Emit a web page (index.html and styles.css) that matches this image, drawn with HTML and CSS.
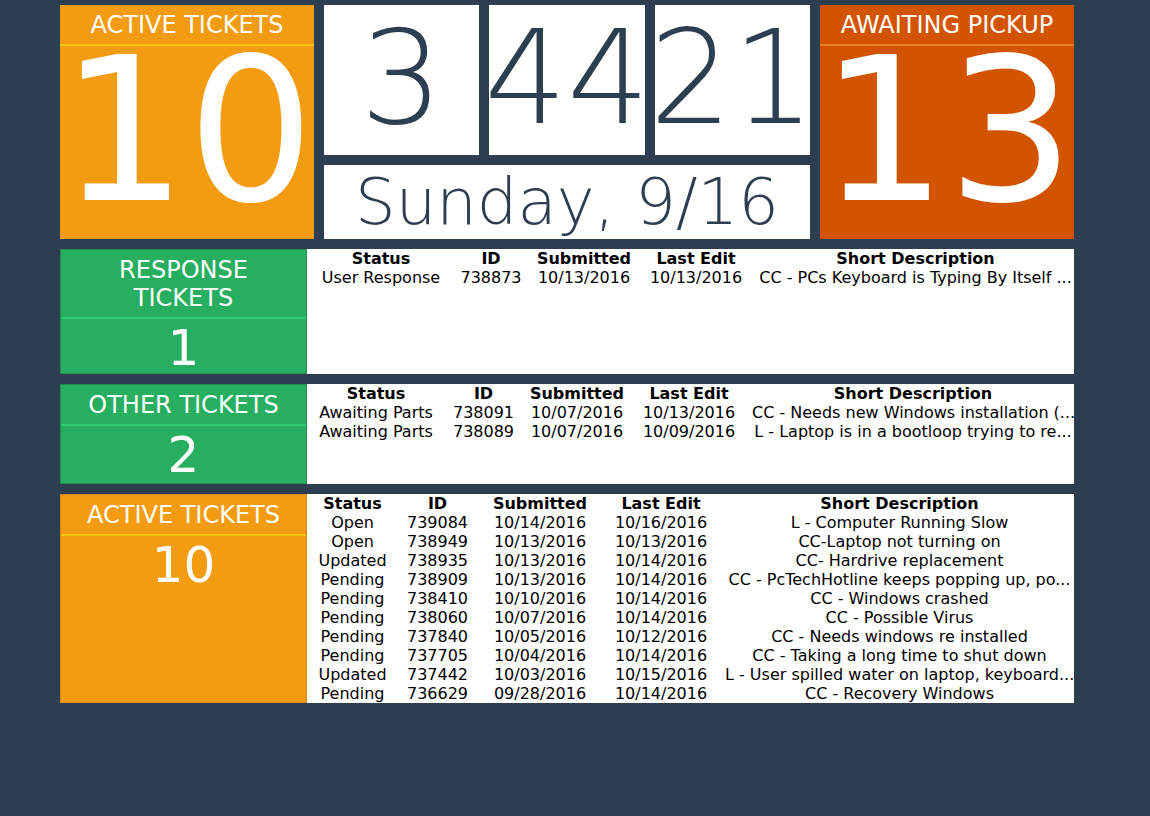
FILE: index.html
```html
<!DOCTYPE html>
<html>
<head>
<meta charset="utf-8">
<title>Ticket Dashboard</title>
<link rel="stylesheet" href="styles.css">
</head>
<body>
<div class="dash">
  <div class="top">
    <div class="card card-orange big">
      <div class="card-head">ACTIVE TICKETS</div>
      <div class="big-num">10</div>
    </div>
    <div class="clock">
      <div class="time">
        <div class="tbox">3</div>
        <div class="tbox">44</div>
        <div class="tbox">21</div>
      </div>
      <div class="date">Sunday, 9/16</div>
    </div>
    <div class="card card-dark big">
      <div class="card-head">AWAITING PICKUP</div>
      <div class="big-num">13</div>
    </div>
  </div>

  <div class="row row-resp">
    <div class="card card-green side">
      <div class="card-head">RESPONSE TICKETS</div>
      <div class="num">1</div>
    </div>
    <div class="panel">
      <table class="tbl tbl-resp">
        <colgroup><col class="c1"><col class="c2"><col class="c3"><col class="c4"><col></colgroup>
        <thead><tr><th>Status</th><th>ID</th><th>Submitted</th><th>Last Edit</th><th class="desc">Short Description</th></tr></thead>
        <tbody>
          <tr><td>User Response</td><td>738873</td><td>10/13/2016</td><td>10/13/2016</td><td class="desc">CC - PCs Keyboard is Typing By Itself ...</td></tr>
        </tbody>
      </table>
    </div>
  </div>

  <div class="row row-other">
    <div class="card card-green side">
      <div class="card-head">OTHER TICKETS</div>
      <div class="num">2</div>
    </div>
    <div class="panel">
      <table class="tbl tbl-other">
        <colgroup><col class="c1"><col class="c2"><col class="c3"><col class="c4"><col></colgroup>
        <thead><tr><th>Status</th><th>ID</th><th>Submitted</th><th>Last Edit</th><th class="desc">Short Description</th></tr></thead>
        <tbody>
          <tr><td>Awaiting Parts</td><td>738091</td><td>10/07/2016</td><td>10/13/2016</td><td class="desc">CC - Needs new Windows installation (...</td></tr>
          <tr><td>Awaiting Parts</td><td>738089</td><td>10/07/2016</td><td>10/09/2016</td><td class="desc">L - Laptop is in a bootloop trying to re...</td></tr>
        </tbody>
      </table>
    </div>
  </div>

  <div class="row row-active">
    <div class="card card-orange side">
      <div class="card-head">ACTIVE TICKETS</div>
      <div class="num">10</div>
    </div>
    <div class="panel">
      <table class="tbl tbl-active">
        <colgroup><col class="c1"><col class="c2"><col class="c3"><col class="c4"><col></colgroup>
        <thead><tr><th>Status</th><th>ID</th><th>Submitted</th><th>Last Edit</th><th class="desc">Short Description</th></tr></thead>
        <tbody>
          <tr><td>Open</td><td>739084</td><td>10/14/2016</td><td>10/16/2016</td><td class="desc">L - Computer Running Slow</td></tr>
          <tr><td>Open</td><td>738949</td><td>10/13/2016</td><td>10/13/2016</td><td class="desc">CC-Laptop not turning on</td></tr>
          <tr><td>Updated</td><td>738935</td><td>10/13/2016</td><td>10/14/2016</td><td class="desc">CC- Hardrive replacement</td></tr>
          <tr><td>Pending</td><td>738909</td><td>10/13/2016</td><td>10/14/2016</td><td class="desc">CC - PcTechHotline keeps popping up, po...</td></tr>
          <tr><td>Pending</td><td>738410</td><td>10/10/2016</td><td>10/14/2016</td><td class="desc">CC - Windows crashed</td></tr>
          <tr><td>Pending</td><td>738060</td><td>10/07/2016</td><td>10/14/2016</td><td class="desc">CC - Possible Virus</td></tr>
          <tr><td>Pending</td><td>737840</td><td>10/05/2016</td><td>10/12/2016</td><td class="desc">CC - Needs windows re installed</td></tr>
          <tr><td>Pending</td><td>737705</td><td>10/04/2016</td><td>10/14/2016</td><td class="desc">CC - Taking a long time to shut down</td></tr>
          <tr><td>Updated</td><td>737442</td><td>10/03/2016</td><td>10/15/2016</td><td class="desc">L - User spilled water on laptop, keyboard...</td></tr>
          <tr><td>Pending</td><td>736629</td><td>09/28/2016</td><td>10/14/2016</td><td class="desc">CC - Recovery Windows</td></tr>
        </tbody>
      </table>
    </div>
  </div>
</div>
</body>
</html>
```

FILE: styles.css
```css
html, body {
  margin: 0;
  padding: 0;
  background: #2c3e50;
  font-family: "DejaVu Sans", "Liberation Sans", sans-serif;
}

.dash {
  width: 1014px;
  margin: 5px 0 0 60px;
  display: flex;
  flex-direction: column;
  gap: 10px;
}

/* ---------- top row ---------- */
.top {
  display: grid;
  grid-template-columns: 254px minmax(0, 1fr) 254px;
  gap: 10px;
  height: 234px;
}

.card {
  color: #fff;
  text-align: center;
  box-sizing: border-box;
  overflow: hidden;
}

.card-head {
  font-size: 24px;
  line-height: 28px;
  padding: 6px 10px 5px;
  border-bottom: 2px solid;
}

.card-orange { background: #f39c12; }
.card-orange .card-head { border-bottom-color: #f1c40f; }
.card-dark { background: #d35400; }
.card-dark .card-head { border-bottom-color: #e67e22; }
.card-green { background: #27ae60; }
.card-green .card-head { border-bottom-color: #2ecc71; }

.big-num {
  font-size: 200px;
  line-height: 170px;
  white-space: nowrap;
}

.clock {
  display: grid;
  grid-template-rows: 150px 74px;
  gap: 10px;
  min-width: 0;
}

.time {
  display: grid;
  grid-template-columns: repeat(3, minmax(0, 1fr));
  gap: 10px;
}

.tbox, .date {
  background: #fff;
  color: #2c3e50;
  font-weight: 200;
  white-space: nowrap;
  display: flex;
  justify-content: center;
  min-width: 0;
}

.tbox {
  font-size: 130px;
  line-height: 146px;
}

.date {
  font-size: 64px;
  line-height: 74px;
}

/* ---------- ticket rows ---------- */
.row {
  display: flex;
}

.row-resp { height: 125px; }
.row-other { height: 100px; }
.row-active { height: 209px; }

.side {
  width: 247px;
  flex: none;
  border: 1px solid;
}

.card-green.side { border-color: #1f8f4e; }
.card-orange.side { border-color: #d68910; }

.num {
  font-size: 50px;
  line-height: 50px;
  padding-top: 4px;
}

.panel {
  flex: 1;
  background: #fff;
  overflow: hidden;
}

.tbl {
  width: 100%;
  table-layout: fixed;
  border-collapse: collapse;
  font-size: 16px;
  line-height: 19px;
  color: #000;
}

.tbl th, .tbl td {
  padding: 0;
  text-align: center;
  white-space: nowrap;
  overflow: hidden;
}

.tbl td { font-weight: normal; }
.tbl th { font-weight: bold; }

.tbl .desc { padding-left: 6px; }

.tbl-resp .c1 { width: 148px; }
.tbl-resp .c2 { width: 72px; }
.tbl-resp .c3 { width: 114px; }
.tbl-resp .c4 { width: 110px; }

.tbl-other .c1 { width: 138px; }
.tbl-other .c2 { width: 77px; }
.tbl-other .c3 { width: 110px; }
.tbl-other .c4 { width: 114px; }

.tbl-active .c1 { width: 91px; }
.tbl-active .c2 { width: 79px; }
.tbl-active .c3 { width: 126px; }
.tbl-active .c4 { width: 116px; }
```
